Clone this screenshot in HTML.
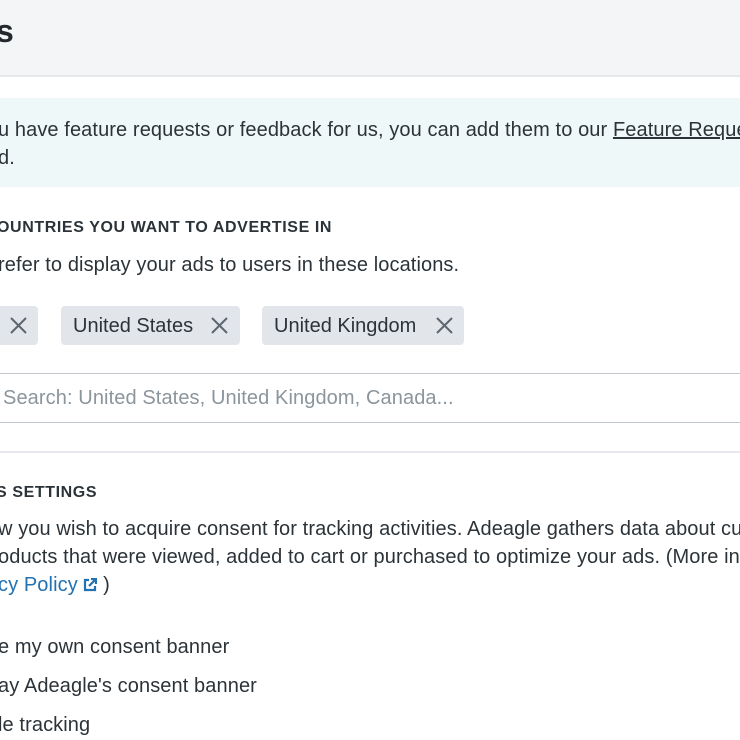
<!DOCTYPE html>
<html><head><meta charset="utf-8"><style>
body{margin:0;width:740px;height:740px;overflow:hidden;background:#fff;font-family:"Liberation Sans",sans-serif;color:#2c3338;position:relative}
#w{position:absolute;left:0;top:0;width:740px;height:740px;overflow:hidden}
.a{position:absolute;white-space:nowrap}
.hdr{position:absolute;left:0;top:0;width:740px;height:75px;background:#f4f5f7;border-bottom:2px solid #e6e8eb}
.ban{position:absolute;left:0;top:98px;width:740px;height:89px;background:#eef8f9}
.t{font-size:20px;letter-spacing:0.1px}
.h{font-size:16px;font-weight:bold;letter-spacing:.6px;color:#2c3338}
.chip{position:absolute;top:306px;height:39px;background:#e2e5e9;border-radius:4px;font-size:20px;line-height:39px;color:#2c3338}
</style></head><body><div id="w">
<div class="hdr"></div>
<div class="a" style="left:-4px;top:13px;font-size:32px;font-weight:bold;color:#23282d">s</div>
<div class="ban"></div>
<div class="a t" style="left:-2px;top:119px">u have feature requests or feedback for us, you can add them to our <u>Feature Requests</u></div>
<div class="a t" style="left:-2px;top:147px">d.</div>
<div class="a h" style="left:-3px;top:219px">OUNTRIES YOU WANT TO ADVERTISE IN</div>
<div class="a t" style="left:-2px;top:254px">refer to display your ads to users in these locations.</div>
<div class="chip" style="left:-10px;width:48px"><svg style="position:absolute;left:20px;top:11px" width="17" height="17" viewBox="0 0 17 17"><path d="M1 1L16 16M16 1L1 16" stroke="#5c6670" stroke-width="2"/></svg></div>
<div class="chip" style="left:61px;width:179px"><span style="position:absolute;left:12px;top:1px">United States</span><svg style="position:absolute;left:150px;top:11px" width="17" height="17" viewBox="0 0 17 17"><path d="M1 1L16 16M16 1L1 16" stroke="#5c6670" stroke-width="2"/></svg></div>
<div class="chip" style="left:262px;width:202px"><span style="position:absolute;left:12px;top:1px">United Kingdom</span><svg style="position:absolute;left:174px;top:11px" width="17" height="17" viewBox="0 0 17 17"><path d="M1 1L16 16M16 1L1 16" stroke="#5c6670" stroke-width="2"/></svg></div>
<div class="a" style="left:0;top:373px;width:740px;height:48px;border-top:1px solid #c3c8cf;border-bottom:1px solid #c3c8cf"></div>
<div class="a t" style="left:3px;top:387px;color:#8c949c">Search: United States, United Kingdom, Canada...</div>
<div class="a" style="left:0;top:451px;width:740px;height:2px;background:#e6e8eb"></div>
<div class="a h" style="left:-4px;top:484px">S SETTINGS</div>
<div class="a t" style="left:-2px;top:518px">w you wish to acquire consent for tracking activities. Adeagle gathers data about customers</div>
<div class="a t" style="left:-2px;top:546px">oducts that were viewed, added to cart or purchased to optimize your ads. (More info</div>
<div class="a t" style="left:-2px;top:574px"><span style="color:#2271b1">cy Policy</span> <svg width="14" height="14" viewBox="0 0 14 14" style="vertical-align:-1px"><path d="M6 2H2V12H12V8" fill="none" stroke="#2271b1" stroke-width="2.2"/><path d="M8 1H13V6M13 1L6 8" fill="none" stroke="#2271b1" stroke-width="2.2"/></svg> )</div>
<div class="a t" style="left:-2px;top:636px">e my own consent banner</div>
<div class="a t" style="left:-2px;top:675px">ay Adeagle's consent banner</div>
<div class="a t" style="left:-2px;top:714px">le tracking</div>
</div></body></html>
